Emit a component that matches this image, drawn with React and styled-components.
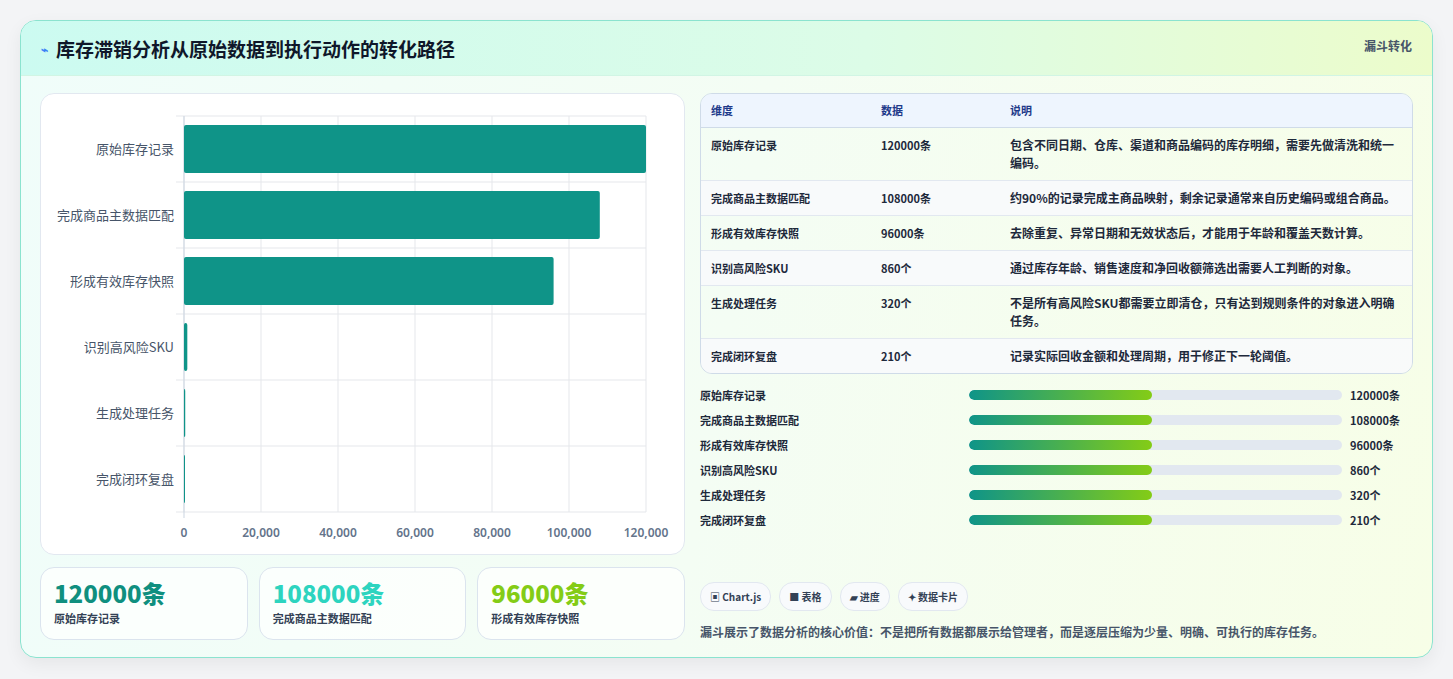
import React from "react";
import styled, { createGlobalStyle } from "styled-components";

const G = createGlobalStyle`
  body{margin:0;background:#f3f4f6;font-family:"Noto Sans CJK SC","Noto Sans",sans-serif;}
`;
const Page = styled.div`padding:20px 20px 22px 20px;`;
const Card = styled.div`
  border:1px solid #8be3cf;border-radius:16px;overflow:hidden;
  background:linear-gradient(100deg,#f0fdfa 0%,#f4fdf4 50%,#f7fee7 100%);
  box-shadow:0 6px 18px rgba(0,0,0,0.06);
`;
const Header = styled.div`
  height:54px;display:flex;align-items:center;justify-content:space-between;padding:0 20px;
  background:linear-gradient(90deg,#ccfbf1 0%,#dcfce7 60%,#ecfccb 100%);
  border-bottom:1px solid #d1f5e4;
`;
const Title = styled.h1`margin:0;font-size:19px;font-weight:700;color:#0f172a;display:flex;align-items:center;gap:8px;`;
const Tag = styled.span`font-size:12px;font-weight:700;color:#475569;align-self:flex-start;margin-top:16px;`;
const Body = styled.div`display:grid;grid-template-columns:645px 1fr;gap:15px;padding:17px 19px 17px 19px;`;
const Col = styled.div`display:flex;flex-direction:column;`;
const ChartBox = styled.div`background:#fff;border:1px solid #e2e8f0;border-radius:14px;height:460px;position:relative;`;
const Stats = styled.div`display:grid;grid-template-columns:repeat(3,1fr);gap:11px;margin-top:12px;`;
const Stat = styled.div`background:rgba(255,255,255,0.7);border:1px solid #dbe4ee;border-radius:14px;padding:10px 13px 9px;height:52px;`;
const Num = styled.div`font-size:24px;font-weight:800;color:${p=>p.c};line-height:30px;`;
const SLabel = styled.div`font-size:11px;color:#334155;font-weight:600;margin-top:2px;`;
const Table = styled.table`width:100%;border-collapse:separate;border-spacing:0;border:1px solid #cfdbe8;border-radius:12px;overflow:hidden;font-size:12px;color:#1e293b;font-weight:600;`;
const Th = styled.th`text-align:left;background:#eef5fe;color:#1e3a8a;padding:8px 10px;font-weight:700;font-size:11px;line-height:17px;border-bottom:1px solid #cfdbe8;`;
const Td = styled.td`padding:8px 10px;vertical-align:top;line-height:18px;font-size:${p=>p.small?"11px":"12px"};border-bottom:${p=>p.last?"none":"1px solid #e2e8f0"};background:${p=>p.alt?"rgba(248,250,252,0.9)":"transparent"};`;
const Bars = styled.div`display:flex;flex-direction:column;gap:7px;margin-top:12px;`;
const BRow = styled.div`display:grid;grid-template-columns:269px 381px 1fr;align-items:center;font-size:11px;font-weight:700;color:#1e293b;height:18px;`;
const Track = styled.div`height:10px;background:#e2e8f0;border-radius:5px;margin-right:8px;overflow:hidden;`;
const Fill = styled.div`height:100%;width:49%;border-radius:5px;background:linear-gradient(90deg,#0f9488,#84cc16);`;
const Chips = styled.div`display:flex;gap:8px;margin-top:auto;`;
const Chip = styled.span`font-size:10px;font-weight:700;color:#334155;border:1px solid #e2e8f0;background:#f8fafc;border-radius:14px;padding:6px 9px;`;
const Note = styled.p`margin:12px 0 0;font-size:12px;font-weight:600;color:#475569;`;

const cats=[["原始库存记录",120000],["完成商品主数据匹配",108000],["形成有效库存快照",96000],["识别高风险SKU",860],["生成处理任务",320],["完成闭环复盘",210]];
const rows=[
["原始库存记录","120000条","包含不同日期、仓库、渠道和商品编码的库存明细，需要先做清洗和统一编码。"],
["完成商品主数据匹配","108000条","约90%的记录完成主商品映射，剩余记录通常来自历史编码或组合商品。"],
["形成有效库存快照","96000条","去除重复、异常日期和无效状态后，才能用于年龄和覆盖天数计算。"],
["识别高风险SKU","860个","通过库存年龄、销售速度和净回收额筛选出需要人工判断的对象。"],
["生成处理任务","320个","不是所有高风险SKU都需要立即清仓，只有达到规则条件的对象进入明确任务。"],
["完成闭环复盘","210个","记录实际回收金额和处理周期，用于修正下一轮阈值。"]];

function Chart(){
  const x0=143,w=462,y0=22,rh=66;
  return <svg width="645" height="460" style={{display:"block"}}>
    {[0,1,2,3,4,5,6].map(i=><g key={i}>
      <line x1={x0+i*w/6} x2={x0+i*w/6} y1={y0} y2={y0+6*rh} stroke="#e5e7eb"/>
      <text x={x0+i*w/6} y={443} fontSize="12" fontWeight="600" fill="#64748b" textAnchor="middle" fontFamily="Noto Sans">{(i*20000).toLocaleString("en-US")}</text></g>)}
    {[0,1,2,3,4,5,6].map(i=><line key={i} x1={x0-8} x2={x0+w} y1={y0+i*rh} y2={y0+i*rh} stroke="#e5e7eb"/>)}
    <line x1={x0} x2={x0} y1={y0} y2={y0+6*rh+6} stroke="#cbd5e1"/>
    {cats.map(([n,v],i)=><g key={n}>
      <text x={x0-10} y={y0+i*rh+38} fontSize="13" fill="#475569" textAnchor="end" fontFamily="Noto Sans CJK SC">{n}</text>
      <rect x={x0} y={y0+i*rh+9} width={Math.max(1,v/120000*w)} height={48} rx="2" fill="#0f9488"/></g>)}
  </svg>;
}

export default function App(){
  return <Page><G/><Card>
    <Header><Title><span style={{color:"#3b82f6",fontSize:12}}>⌁</span>库存滞销分析从原始数据到执行动作的转化路径</Title><Tag>漏斗转化</Tag></Header>
    <Body>
      <Col>
        <ChartBox><Chart/></ChartBox>
        <Stats>
          <Stat><Num c="#0f8f7f">120000条</Num><SLabel>原始库存记录</SLabel></Stat>
          <Stat><Num c="#2dd4bf">108000条</Num><SLabel>完成商品主数据匹配</SLabel></Stat>
          <Stat><Num c="#84cc16">96000条</Num><SLabel>形成有效库存快照</SLabel></Stat>
        </Stats>
      </Col>
      <Col>
        <Table><thead><tr><Th style={{width:150}}>维度</Th><Th style={{width:109}}>数据</Th><Th>说明</Th></tr></thead>
          <tbody>{rows.map((r,i)=><tr key={i}>{r.map((c,j)=><Td key={j} small={j<2} alt={i%2===1} last={i===5}>{c}</Td>)}</tr>)}</tbody></Table>
        <Bars>{cats.map(([n],i)=><BRow key={n}><span>{n}</span><Track><Fill/></Track><span>{rows[i][1]}</span></BRow>)}</Bars>
        <Chips><Chip>▣ Chart.js</Chip><Chip>■ 表格</Chip><Chip>▰ 进度</Chip><Chip>✦ 数据卡片</Chip></Chips>
        <Note>漏斗展示了数据分析的核心价值：不是把所有数据都展示给管理者，而是逐层压缩为少量、明确、可执行的库存任务。</Note>
      </Col>
    </Body>
  </Card></Page>;
}
